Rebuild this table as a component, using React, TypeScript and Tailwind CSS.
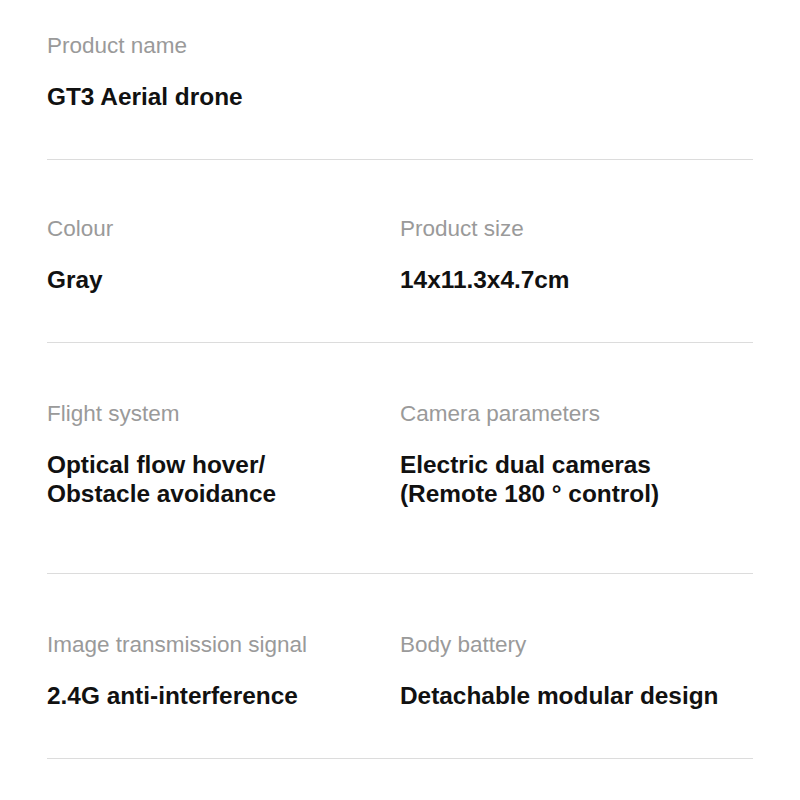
const specs = [
  { pt: "pt-[33px]", pb: "pb-[48px]", items: [{ label: "Product name", value: ["GT3 Aerial drone"] }] },
  {
    pt: "pt-[56px]",
    pb: "pb-[48px]",
    items: [
      { label: "Colour", value: ["Gray"] },
      { label: "Product size", value: ["14x11.3x4.7cm"] },
    ],
  },
  {
    pt: "pt-[58px]",
    pb: "pb-[65px]",
    items: [
      { label: "Flight system", value: ["Optical flow hover/", "Obstacle avoidance"] },
      { label: "Camera parameters", value: ["Electric dual cameras", "(Remote 180 ° control)"] },
    ],
  },
  {
    pt: "pt-[58px]",
    pb: "pb-[48px]",
    items: [
      { label: "Image transmission signal", value: ["2.4G anti-interference"] },
      { label: "Body battery", value: ["Detachable modular design"] },
    ],
  },
];

const SpecItem = ({ label, value }: { label: string; value: string[] }) => (
  <div>
    <div className="text-[22.5px] leading-[26px] text-[#9a9a9a]">{label}</div>
    <div className="mt-[23px] text-[24.4px] leading-[29px] font-bold text-[#111]">
      {value.map((line) => (
        <div key={line}>{line}</div>
      ))}
    </div>
  </div>
);

export default function App() {
  return (
    <div
      className="w-[800px] h-[800px] bg-white px-[47px] overflow-hidden"
      style={{ fontFamily: '"Liberation Sans", Arial, sans-serif' }}
    >
      {specs.map((row, i) => (
        <div key={i} className={`grid grid-cols-2 border-b border-[#dcdcdc] ${row.pt} ${row.pb}`}>
          {row.items.map((item) => (
            <SpecItem key={item.label} label={item.label} value={item.value} />
          ))}
        </div>
      ))}
    </div>
  );
}
